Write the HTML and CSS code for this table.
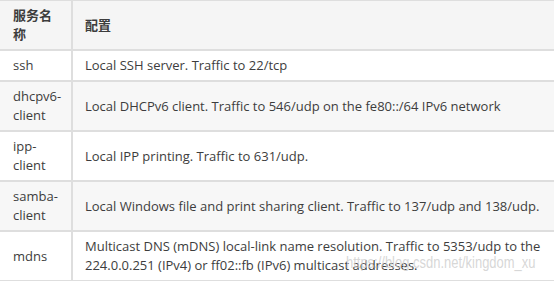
FILE: index.html
```html
<!DOCTYPE html>
<html lang="zh-CN">
<head>
  <meta charset="UTF-8" />
  <title>firewalld services</title>
  <link rel="stylesheet" href="styles.css">
</head>
<body>
  <div class="table-wrap">
    <table class="svc-table">
      <thead>
        <tr>
          <th class="col-name">服务名称</th>
          <th>配置</th>
        </tr>
      </thead>
      <tbody>
        <tr>
          <td>ssh</td>
          <td>Local SSH server. Traffic to 22/tcp</td>
        </tr>
        <tr>
          <td>dhcpv6-client</td>
          <td>Local DHCPv6 client. Traffic to 546/udp on the fe80::/64 IPv6 network</td>
        </tr>
        <tr>
          <td>ipp-client</td>
          <td>Local IPP printing. Traffic to 631/udp.</td>
        </tr>
        <tr>
          <td>samba-client</td>
          <td>Local Windows file and print sharing client. Traffic to 137/udp and 138/udp.</td>
        </tr>
        <tr>
          <td>mdns</td>
          <td>Multicast DNS (mDNS) local-link name resolution. Traffic to 5353/udp to the 224.0.0.251 (IPv4) or ff02::fb (IPv6) multicast addresses.</td>
        </tr>
      </tbody>
    </table>
    <div class="watermark">https://blog.csdn.net/kingdom_xu</div>
  </div>
</body>
</html>
```

FILE: styles.css
```css
:root {
  --text: #3d3d3d;
  --border: #dedede;
  --stripe: #f7f7f7;
  --head-bg: #f5f5f5;
}

* {
  margin: 0;
  padding: 0;
  box-sizing: border-box;
}

body {
  background: #fff;
  color: var(--text);
  font-family: 'Open Sans', 'Noto Sans CJK SC', sans-serif;
  font-size: 13px;
}

.table-wrap {
  position: relative;
  width: 554px;
  overflow: hidden;
}

.svc-table {
  width: 100%;
  border-collapse: collapse;
  table-layout: fixed;
}

.svc-table th,
.svc-table td {
  text-align: left;
  vertical-align: middle;
  line-height: 19px;
  padding: 5px 12px 5px 12px;
  border-bottom: 2px solid var(--border);
}

.svc-table th:first-child,
.svc-table td:first-child {
  width: 72px;
  padding-left: 13px;
  border-right: 2px solid var(--border);
}

.svc-table th {
  background: var(--head-bg);
  font-weight: 700;
  height: 49px;
  border-top: 1px solid var(--border);
}

.svc-table .col-name {
  word-break: break-all;
}

.svc-table tbody tr:nth-child(even) td {
  background: var(--stripe);
}

.svc-table td {
  height: 31px;
}

.watermark {
  position: absolute;
  left: 346px;
  top: 254px;
  font-family: 'Liberation Sans', sans-serif;
  font-size: 16px;
  color: rgba(205, 205, 205, 0.8);
  white-space: nowrap;
  transform: scaleX(0.81);
  transform-origin: left top;
}
```
